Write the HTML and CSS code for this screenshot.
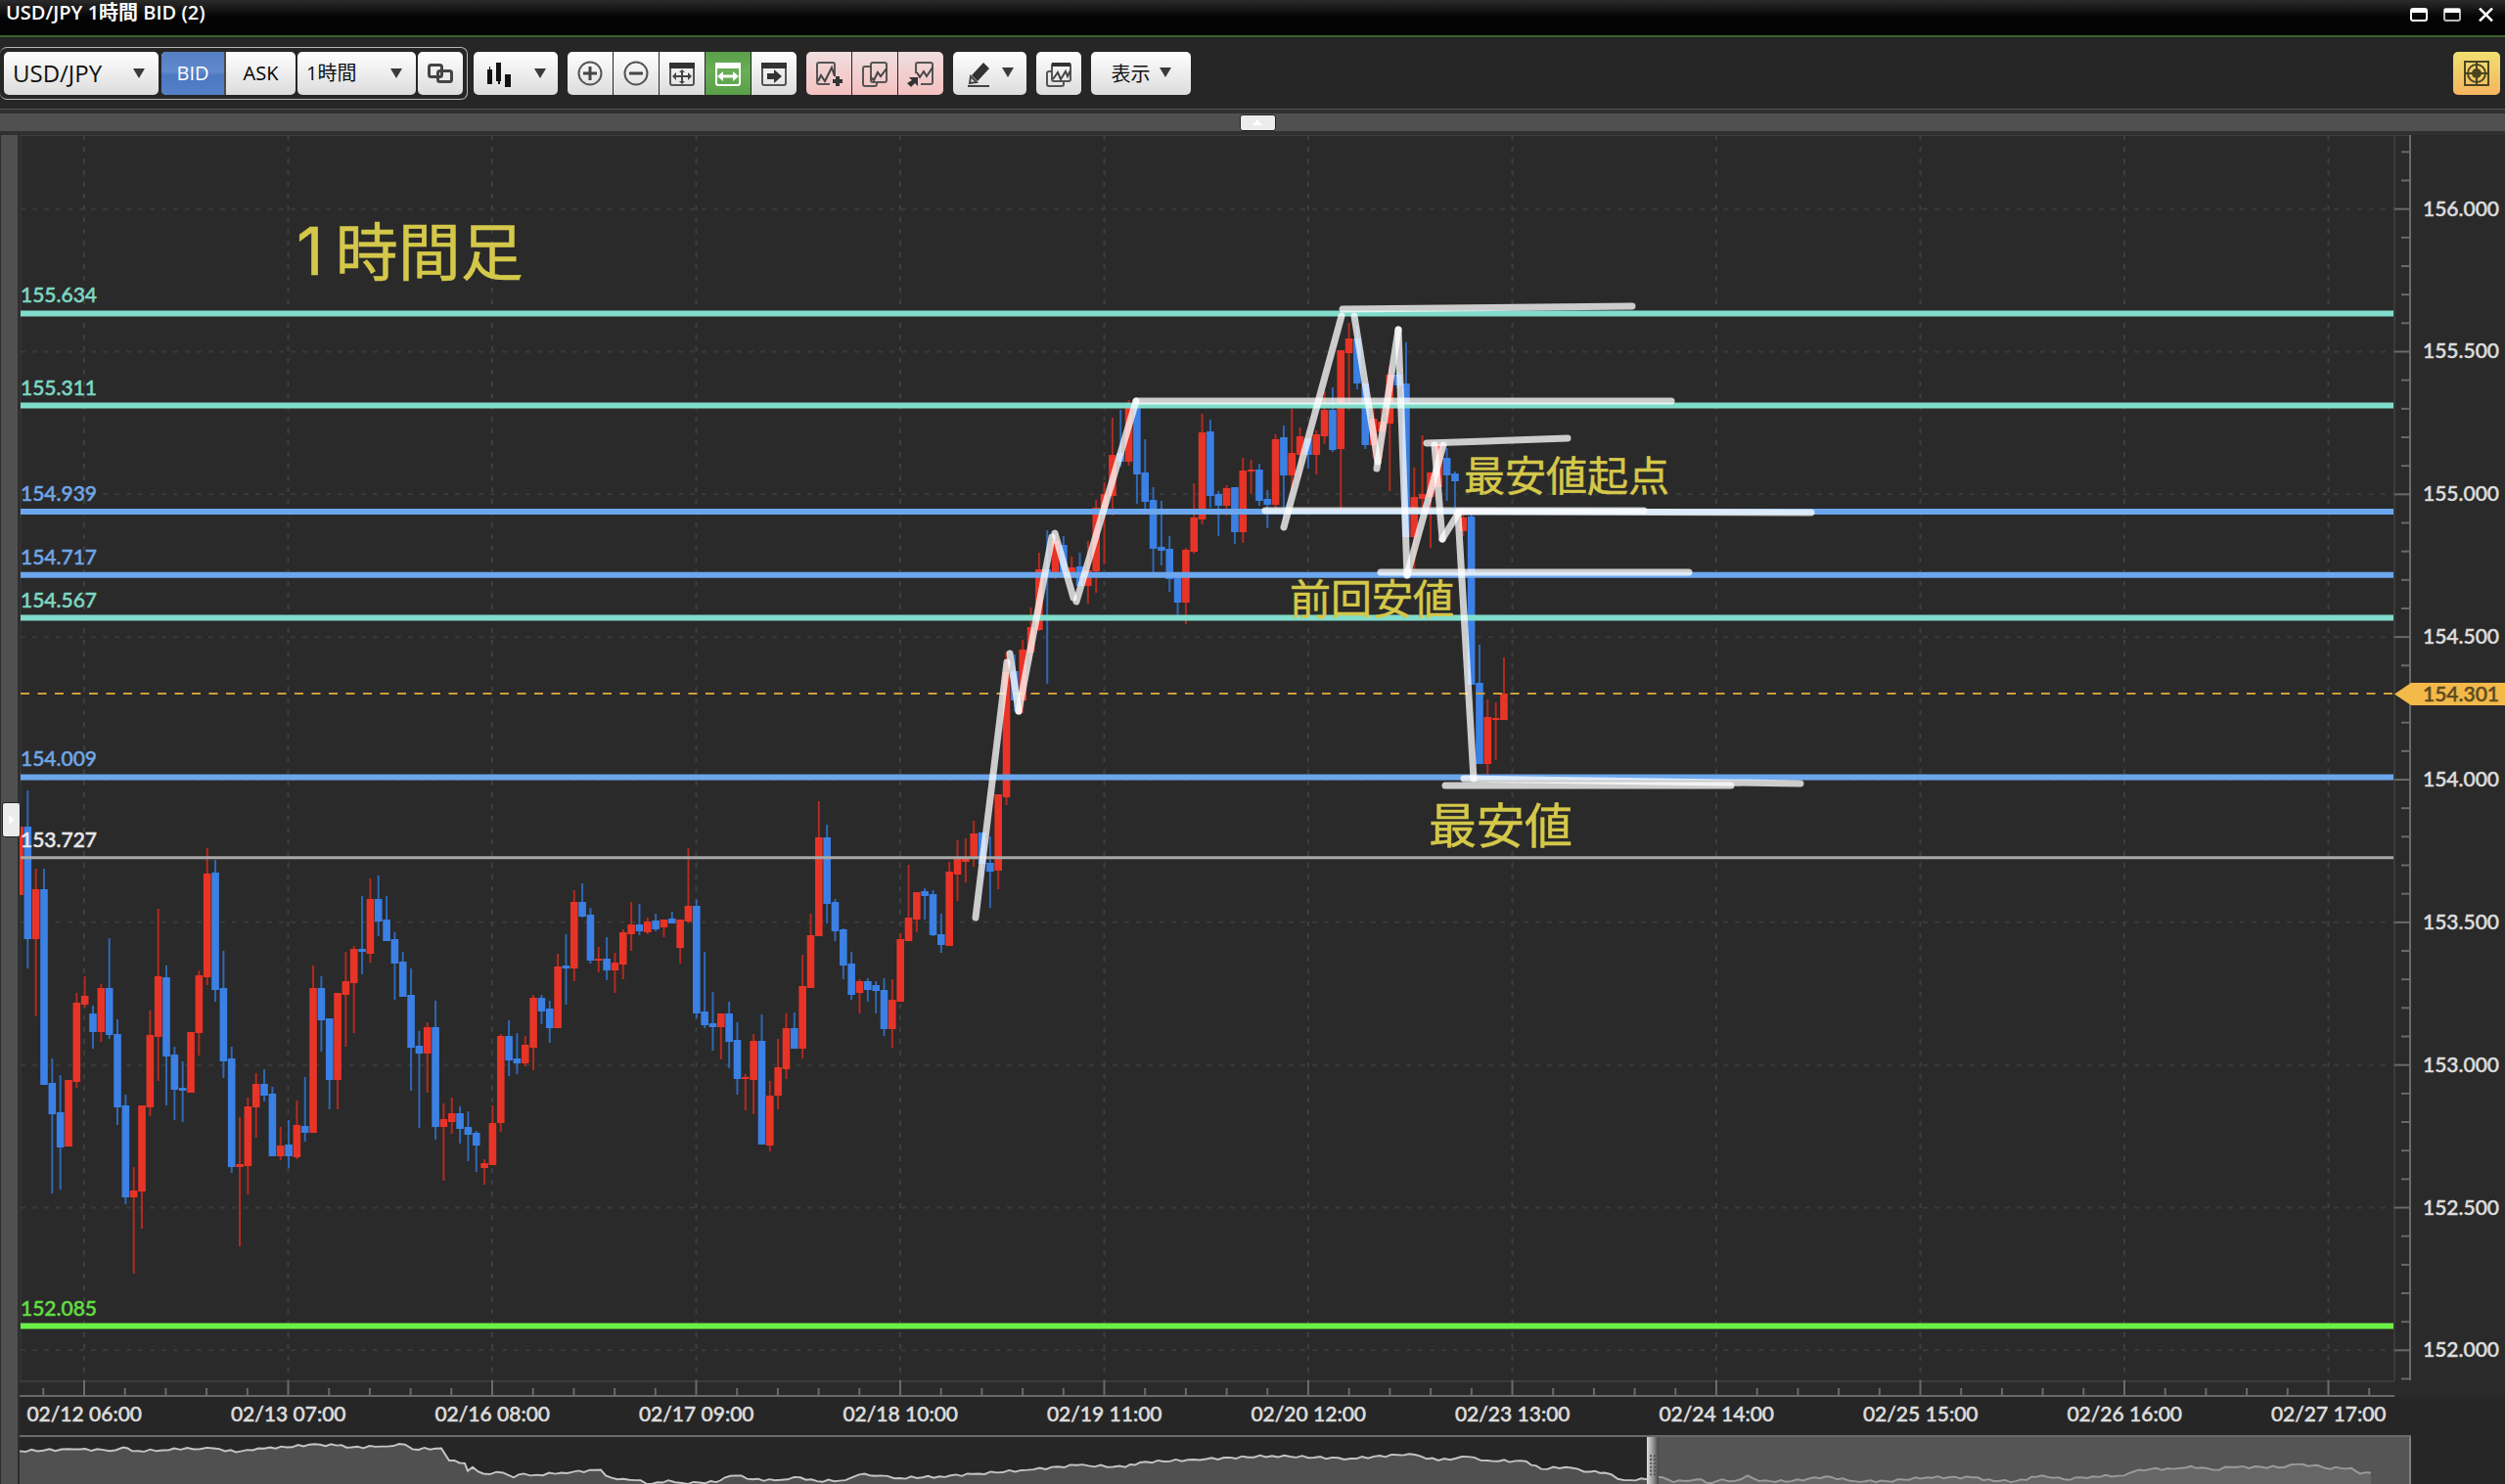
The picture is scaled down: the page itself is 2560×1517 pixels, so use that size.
FILE: index.html
```html
<!DOCTYPE html>
<html lang="ja">
<head>
  <meta charset="UTF-8" />
  <meta name="viewport" content="width=device-width, initial-scale=1.0"/>
  <title>USD/JPY 1時間 BID (2)</title>
  <link rel="stylesheet" href="styles.css">
</head>
<body>
  <header class="title-bar">
    <h1>USD/JPY 1時間 BID (2)</h1>
    <div class="window-buttons">
      <button type="button" aria-label="最小化">
        <svg width="18" height="14" viewBox="0 0 18 14"><rect x="1" y="1" width="16" height="12" rx="2" fill="none" stroke="#fff" stroke-width="2"/><path d="M1 1h16v4H1z" fill="#fff"/></svg>
      </button>
      <button type="button" aria-label="最大化">
        <svg width="18" height="14" viewBox="0 0 18 14"><rect x="1" y="1" width="16" height="12" rx="2" fill="none" stroke="#bbb" stroke-width="2"/><path d="M1 1h16v4H1z" fill="#fff"/></svg>
      </button>
      <button type="button" aria-label="閉じる">
        <svg width="18" height="14" viewBox="0 0 18 14"><path d="M3 0.500l13 13M16 0.500l-13 13" stroke="#fff" stroke-width="2.500"/></svg>
      </button>
    </div>
  </header>

  <nav class="toolbar">
    <div class="symbol-box">
      <div class="select select-symbol">
        <select aria-label="通貨ペア"><option>USD/JPY</option></select>
        <svg class="caret" viewBox="0 0 12 10"><path d="M0 0h12L6 10z"/></svg>
      </div>
      <div class="side">
        <button type="button" class="bid">BID</button>
        <button type="button" class="ask">ASK</button>
      </div>
      <div class="select select-period">
        <select aria-label="足種"><option>1時間</option></select>
        <svg class="caret" viewBox="0 0 12 10"><path d="M0 0h12L6 10z"/></svg>
      </div>
      <button type="button" class="btn" aria-label="連動">
        <svg class="icon" viewBox="0 0 28 28"><g fill="none" stroke="#444" stroke-width="3"><rect x="2.500" y="5.500" width="13" height="12" rx="2"/><rect x="11.500" y="11.500" width="14" height="11" rx="2"/></g></svg>
      </button>
    </div>

    <button type="button" class="btn btn-type" aria-label="チャート種類">
      <svg class="icon" viewBox="0 0 28 28"><path d="M2 10h5v15H2zM4 7h1v3H4zM11 3h5v19h-5zM13 22h2v3h-2zM20 15h6v13h-6z" fill="#111"/></svg>
      <svg class="caret" viewBox="0 0 12 10"><path d="M0 0h12L6 10z"/></svg>
    </button>

    <div class="group">
      <button type="button" class="btn" aria-label="拡大">
        <svg class="icon" viewBox="0 0 28 28"><circle cx="14" cy="14" r="11.500" fill="none" stroke="#555" stroke-width="2"/><path d="M7 14h14M14 7v14" stroke="#444" stroke-width="3"/></svg>
      </button>
      <button type="button" class="btn" aria-label="縮小">
        <svg class="icon" viewBox="0 0 28 28"><circle cx="14" cy="14" r="11.500" fill="none" stroke="#555" stroke-width="2"/><path d="M7 14h14" stroke="#444" stroke-width="3"/></svg>
      </button>
      <button type="button" class="btn" aria-label="全体表示">
        <svg class="icon" viewBox="0 0 28 28"><rect x="2" y="4" width="24" height="22" rx="2" fill="none" stroke="#555" stroke-width="2"/><path d="M1 3h26v6H1z" fill="#333"/><path d="M7 17h14M14 11v12" stroke="#444" stroke-width="2"/><path d="M4 17l4-4v8zM24 17l-4-4v8zM14 10l3 3h-6zM14 25l3-3h-6z" fill="#444"/></svg>
      </button>
      <button type="button" class="btn btn-active" aria-label="横幅に合わせる">
        <svg class="icon" viewBox="0 0 28 28"><rect x="2" y="4" width="24" height="22" rx="2" fill="none" stroke="#fff" stroke-width="2"/><path d="M1 3h26v6H1z" fill="#fff"/><path d="M7 17h14" stroke="#fff" stroke-width="3"/><path d="M3 17l6-5v10zM25 17l-6-5v10z" fill="#fff"/></svg>
      </button>
      <button type="button" class="btn" aria-label="最新へ移動">
        <svg class="icon" viewBox="0 0 28 28"><rect x="2" y="4" width="24" height="22" rx="2" fill="none" stroke="#555" stroke-width="2"/><path d="M1 3h26v6H1z" fill="#333"/><path d="M7 14h7v-4l8 7-8 7v-4H7z" fill="#333"/></svg>
      </button>
    </div>

    <div class="group group-pink">
      <button type="button" class="btn" aria-label="テクニカル追加">
        <svg class="icon" viewBox="0 0 28 28"><path d="M15 25H4a2 2 0 0 1-2-2V5a2 2 0 0 1 2-2h14a2 2 0 0 1 2 2v12" fill="none" stroke="#555" stroke-width="2"/><path d="M3 22l3-6 4 6 7-14 3 9" fill="none" stroke="#444" stroke-width="2"/><path d="M18 22h10M23 17v10" stroke="#333" stroke-width="4"/></svg>
      </button>
      <button type="button" class="btn" aria-label="テクニカル複製">
        <svg class="icon" viewBox="0 0 28 28"><g fill="none" stroke="#555" stroke-width="2"><path d="M10 7H4a2 2 0 0 0-2 2v16a2 2 0 0 0 2 2h10a2 2 0 0 0 2-2v-2"/><rect x="10" y="3" width="16" height="20" rx="2"/><path d="M10 18l3 3 4-8 3 4 6-8" stroke="#444"/></g></svg>
      </button>
      <button type="button" class="btn" aria-label="テクニカル呼出">
        <svg class="icon" viewBox="0 0 28 28"><g fill="none" stroke="#555" stroke-width="2"><path d="M9 14V5a2 2 0 0 1 2-2h13a2 2 0 0 1 2 2v18a2 2 0 0 1-2 2H14"/><path d="M10 13l3 5 4-6 3 5 6-9" stroke="#444"/></g><path d="M2 18h9v9l-3-3-4 4-4-4 5-3z" fill="#333"/></svg>
      </button>
    </div>

    <button type="button" class="btn btn-pen" aria-label="描画">
      <svg class="icon" viewBox="0 0 28 28"><path d="M18 3l6 6L12 22l-6-6z" fill="#333"/><path d="M5 17l6 6-7 1z" fill="none" stroke="#444" stroke-width="2"/><path d="M2 27h22" stroke="#444" stroke-width="2"/></svg>
      <svg class="caret" viewBox="0 0 12 10"><path d="M0 0h12L6 10z"/></svg>
    </button>

    <button type="button" class="btn" aria-label="チャート一覧">
      <svg class="icon" viewBox="0 0 28 28"><g fill="none" stroke="#555" stroke-width="2"><path d="M7 12H4a2 2 0 0 0-2 2v11a2 2 0 0 0 2 2h13a2 2 0 0 0 2-2v-3"/><rect x="7" y="4" width="19" height="18" rx="2"/><path d="M8 20l5-7 3 7 5-8 2 5 3-6" stroke="#444"/></g><path d="M7 3h19v4H7z" fill="#333"/></svg>
    </button>

    <button type="button" class="btn btn-view">表示
      <svg class="caret" viewBox="0 0 12 10"><path d="M0 0h12L6 10z"/></svg>
    </button>

    <button type="button" class="btn btn-target" aria-label="照準">
      <svg class="icon" viewBox="0 0 28 28"><g fill="none" stroke="#4a4520" stroke-width="2"><rect x="2" y="2" width="24" height="24"/><circle cx="14" cy="14" r="9"/><path d="M2 14h24M14 2v24" stroke-width="2"/></g><circle cx="14" cy="14" r="5" fill="#4a4520"/></svg>
    </button>
  </nav>

  <div class="splitter">
    <button type="button" class="splitter-handle" aria-label="上部パネル"><svg width="10" height="6" viewBox="0 0 10 6"><path d="M5 0l5 6H0z" fill="#fff"/></svg></button>
  </div>

  <main class="workspace">
    <aside class="rail">
      <button type="button" class="rail-handle" aria-label="左パネル"><svg width="6" height="10" viewBox="0 0 6 10"><path d="M0 0l6 5-6 5z" fill="#fff"/></svg></button>
    </aside>

    <section class="plot" id="plot">
      <svg id="chart" viewBox="20 138 2444 1290" preserveAspectRatio="none"></svg>
    </section>
    <div class="price-axis" id="price-axis"></div>

    <div class="time-axis" id="time-axis"></div>

    <div class="overview">
      <svg id="overview" viewBox="20 1467 2444 50" preserveAspectRatio="none"></svg>
    </div>
  </main>

  <script src="chart.js"></script>
</body>
</html>
```
FILE: styles.css
```css
* {
  margin: 0;
  padding: 0;
  box-sizing: border-box;
}

body {
  display: flex;
  flex-direction: column;
  height: 100vh;
  overflow: hidden;
  background-color: #262626;
  color: #dcdcdc;
  font-family: 'Open Sans', 'Noto Sans CJK JP', sans-serif;
  font-size: 20px;
}

button,
select {
  font: inherit;
  border: none;
  cursor: pointer;
}

svg {
  display: block;
}

/* Title bar */
.title-bar {
  display: flex;
  justify-content: space-between;
  height: 38px;
  padding: 0 11px 0 6px;
  background: linear-gradient(#2b2b2b, #030303 50%);
  border-bottom: 2px solid #37612f;
}

.title-bar h1 {
  font-size: 20px;
  font-weight: 600;
  line-height: 26px;
  color: #fff;
}

.window-buttons {
  display: flex;
  gap: 16px;
  height: 30px;
}

.window-buttons button {
  background: none;
}

/* Toolbar */
.toolbar {
  display: flex;
  align-items: center;
  gap: 10px;
  height: 74px;
  padding: 0 5px 0 0;
  border-bottom: 1px solid #555;
}

.symbol-box {
  display: flex;
  gap: 2px;
  margin-right: -4px;
  padding: 4px;
  border: 1px solid #b5b5b5;
  border-left-width: 0;
  border-radius: 7px;
}

.btn,
.select,
.side {
  height: 44px;
  border-radius: 5px;
  background: linear-gradient(#fff, #dcdcdc);
}

.btn {
  display: flex;
  align-items: center;
  justify-content: center;
  gap: 12px;
  width: 46px;
  color: #111;
}

.icon {
  width: 28px;
  height: 28px;
}

.caret {
  width: 12px;
  height: 10px;
  fill: #3a3a3a;
}

.select {
  position: relative;
}

.select select {
  width: 100%;
  height: 100%;
  padding-left: 9px;
  appearance: none;
  background: none;
  color: #111;
}

.select .caret {
  position: absolute;
  top: 17px;
  right: 14px;
  pointer-events: none;
}

.select-symbol {
  width: 158px;
}

.select-symbol select {
  font-size: 24px;
}

.select-period {
  width: 121px;
}

.side {
  display: flex;
  overflow: hidden;
  margin-left: 1px;
}

.side button {
  background: none;
}

.side .bid {
  width: 66px;
  background: linear-gradient(#557fc4, #6189cc 45%, #4c78c2 55%, #5480c8);
  border-right: 2px solid #4a4a4a;
  color: #fff;
}

.side .ask {
  width: 71px;
}

.group {
  display: flex;
  gap: 1px;
}

.group .btn {
  border-radius: 0;
}

.group .btn:first-child {
  border-radius: 5px 0 0 5px;
}

.group .btn:last-child {
  border-radius: 0 5px 5px 0;
}

.group .btn-active {
  background: linear-gradient(#5a9e4a, #6aae57 45%, #58a046);
}

.group-pink .btn {
  background: linear-gradient(#f0dede, #f5c0c0);
}

.btn-type {
  width: 86px;
  gap: 22px;
}

.btn-pen {
  width: 75px;
}

.btn-view {
  width: 102px;
}

.btn-view .caret,
.btn-pen .caret {
  margin-bottom: 2px;
}

.btn-pen,
.btn-view {
  gap: 9px;
}

.btn-target {
  width: 48px;
  margin-left: auto;
  background: linear-gradient(#efe070, #f5b560);
}

/* Splitters */
.splitter {
  display: flex;
  align-items: center;
  justify-content: center;
  height: 26px;
  padding-left: 10px;
  background-color: #505050;
  border-top: 4px solid #303030;
  border-bottom: 4px solid #303030;
}

.splitter-handle,
.rail-handle {
  display: flex;
  align-items: center;
  justify-content: center;
  background-color: #ececec;
  border: 1px solid #222;
  border-radius: 3px;
}

.splitter-handle {
  width: 37px;
  height: 17px;
}

.rail {
  grid-row: 1 / 4;
  display: flex;
  align-items: center;
  padding-top: 20px;
  background: linear-gradient(90deg, #2d2d2d 1px, #505050 1px, #505050 18px, #2d2d2d 18px);
}

.rail-handle {
  flex: none;
  width: 19px;
  height: 36px;
  margin-left: 2px;
  position: relative;
  z-index: 2;
}

/* Chart */
.workspace {
  flex: 1;
  min-height: 0;
  display: grid;
  grid-template-columns: 20px 1fr 96px;
  grid-template-rows: 1fr 39px 50px;
  font-family: Lato, 'Noto Sans CJK JP', sans-serif;
  font-size: 21px;
  font-weight: 500;
  -webkit-text-stroke: 0.5px currentColor;
}

.plot,
.price-axis {
  position: relative;
  min-height: 0;
  background-color: #2a2a2a;
}

.plot svg {
  position: absolute;
  width: 100%;
  height: 100%;
}

.level-label {
  position: absolute;
  left: 1px;
  margin-top: -31px;
  line-height: 24px;
}

.level-label.teal { color: #7dd6c2; }
.level-label.blue { color: #6fa5e6; }
.level-label.white { color: #e8e8e8; }
.level-label.green { color: #62dc42; }

.note {
  position: absolute;
  transform: translateY(-50%);
  color: #d4c84a;
  font-family: 'Noto Sans CJK JP', sans-serif;
  font-weight: 400;
  line-height: 1;
  white-space: nowrap;
}

.note-small { font-size: 42px; }
.note-medium { font-size: 49px; }
.note-large { font-size: 64px; }

.note-large b {
  margin-right: 12px;
  font-family: Inter, sans-serif;
  font-size: 68px;
  font-weight: 400;
}

.price-axis span {
  position: absolute;
  left: 12px;
  margin-top: -13px;
  line-height: 24px;
}

.price-axis .current {
  left: -17px;
  width: 113px;
  height: 23px;
  margin-top: -11px;
  padding-left: 29px;
  line-height: 22px;
  background-color: #f3b949;
  color: #5c4a22;
  clip-path: polygon(0 50%, 17px 0, 100% 0, 100% 100%, 17px 100%);
}

.time-axis {
  display: grid;
  grid-template-columns: repeat(12, 1fr);
  grid-column: 2;
  margin: 0 -20px 0 -38px;
  line-height: 34px;
  text-align: center;
}

.overview {
  grid-column: 2;
  border-top: 2px solid #6a6a6a;
}

.overview svg {
  width: 100%;
  height: 100%;
}
```
FILE: chart.js
```js
// Chart units: one candle every 8.335, 291.67 per yen, 154.000 sits at 797
const LEFT = 20, TOP = 138, WIDTH = 2444, HEIGHT = 1290;
const priceY = p => 797 + (154 - p) * 291.67;
const pctX = x => ((x - LEFT) / WIDTH * 100) + '%';
const pctY = y => ((y - TOP) / HEIGHT * 100) + '%';

// colour, high, body top, body bottom, low
const candles = `r 845 845 915 915,b 808 845 960 990,r 888 909 960 1039,b 888 909 1109 1109,b 1082 1107 1139 1220,
b 1099 1137 1173 1216,r 1104 1104 1172 1172,r 1015 1025 1106 1112,r 998 1018 1027 1030,b 1028 1036 1055 1072,
r 1006 1010 1055 1065,b 959 1010 1058 1062,b 1042 1057 1132 1150,b 1119 1130 1224 1231,r 1193 1217 1224 1302,
r 1130 1130 1218 1256,r 1033 1058 1132 1141,r 929 998 1060 1105,b 987 999 1080 1130,b 1070 1078 1114 1145,
b 1085 1112 1115 1147,r 1055 1055 1117 1117,r 992 997 1056 1079,r 867 893 999 1007,b 879 892 1012 1024,
b 972 1010 1085 1102,b 1070 1082 1193 1199,r 1142 1190 1193 1274,r 1122 1131 1192 1221,r 1097 1108 1132 1163,
b 1093 1108 1120 1126,b 1111 1118 1182 1182,r 1152 1171 1182 1186,b 1145 1170 1182 1194,r 1125 1150 1183 1185,
b 1101 1151 1158 1167,r 987 1010 1158 1158,b 998 1010 1043 1075,b 1041 1041 1104 1134,r 1015 1015 1104 1134,
r 973 1003 1017 1070,r 967 970 1005 1056,b 916 970 973 996,r 898 919 975 984,b 895 919 942 957,
b 916 940 962 962,b 953 960 985 1022,b 973 983 1019 1019,b 990 1017 1071 1115,b 1054 1069 1077 1153,
r 1045 1050 1077 1117,b 1023 1050 1152 1165,r 1128 1144 1152 1207,r 1122 1138 1147 1159,b 1131 1138 1154 1169,
b 1136 1152 1160 1187,b 1156 1158 1171 1198,r 1185 1189 1194 1211,r 1130 1148 1191 1191,r 1057 1059 1148 1157,
b 1043 1059 1084 1100,b 1056 1082 1087 1098,r 1059 1068 1087 1090,r 1017 1020 1071 1094,b 1017 1020 1034 1047,
b 1023 1031 1051 1066,r 975 988 1051 1051,b 955 987 990 1027,r 910 922 990 1003,b 903 922 937 938,
b 928 935 982 985,r 968 980 982 994,b 958 980 992 1002,r 974 984 992 1015,r 950 953 986 1001,
r 922 945 955 972,b 924 945 952 956,r 938 942 953 955,b 934 941 950 952,r 940 940 948 958,
b 932 939 944 944,r 940 940 969 985,r 867 926 942 944,b 920 926 1036 1041,b 973 1034 1048 1051,
b 1014 1046 1050 1074,r 1036 1036 1050 1083,b 1024 1036 1065 1092,b 1045 1063 1103 1119,r 1098 1101 1103 1135,
r 1057 1064 1104 1139,b 1037 1064 1170 1170,r 1105 1120 1171 1177,r 1062 1091 1120 1134,r 1036 1051 1093 1103,
b 1035 1051 1072 1072,r 976 1008 1072 1082,r 934 956 1010 1010,r 819 856 957 957,b 843 856 924 944,
b 919 922 952 962,b 949 950 987 1001,b 973 985 1017 1022,r 1001 1003 1015 1036,b 1000 1003 1012 1024,
b 1003 1007 1013 1036,b 1000 1012 1052 1059,r 1001 1022 1052 1071,r 954 960 1024 1024,r 884 938 962 962,
r 912 912 940 953,b 908 911 916 940,b 910 914 956 957,b 934 955 966 974,r 881 891 967 967,
r 859 878 894 921,r 857 877 881 902,r 839 852 877 886,b 851 851 883 897,b 855 882 891 928,
r 812 812 890 909,r 667 687 815 823,b 669 686 716 727,r 654 664 716 729,r 621 641 667 676,
r 565 582 644 645,b 542 582 587 699,r 547 553 585 592,b 548 557 585 588,r 569 580 588 591,
b 565 579 599 599,r 553 583 599 617,r 511 519 584 606,r 493 505 523 577,r 427 465 507 527,
b 419 463 472 477,r 409 413 472 476,b 406 413 485 515,b 449 483 513 520,b 498 511 561 586,
b 512 559 563 578,b 548 561 592 605,b 587 587 616 630,r 560 562 616 638,r 494 529 564 566,
r 423 442 531 536,b 429 441 507 519,b 502 505 517 548,r 496 499 517 527,b 498 498 544 556,
r 468 481 544 555,r 470 480 482 505,b 474 480 512 517,b 501 510 516 540,r 444 449 516 520,
b 435 447 486 531,r 418 463 486 500,r 437 446 465 488,b 448 448 465 479,r 440 444 465 485,
r 400 419 446 454,b 396 419 460 462,r 358 358 459 521,r 330 346 361 419,b 333 346 392 398,
b 392 392 455 459,r 411 428 455 469,r 417 431 441 469,r 374 383 433 502,b 380 383 394 397,
b 350 392 549 549,r 478 508 549 583,r 445 505 510 524,r 483 483 508 560,r 454 454 498 498,
b 458 468 486 512,b 482 484 492 519,r 526 529 543 548,b 526 528 700 700,b 659 698 781 781,
r 715 733 781 792,r 718 734 736 777,r 672 709 736 736`.split(',').map(s => s.trim().split(' '));

const levels = [
  [155.634, 'teal'], [155.311, 'teal'], [154.939, 'blue'], [154.717, 'blue'],
  [154.567, 'teal'], [154.009, 'blue'], [153.727, 'white'], [152.085, 'green']
];
const levelColors = { teal: '#80dccb', blue: '#6ca7ee', white: '#a8a8a8', green: '#6cf046' };

// hand drawn strokes: x1 y1 x2 y2
const strokes = [
  [997, 938, 1029, 677], [1032, 668, 1041, 727], [1041, 727, 1075, 549], [1078, 545, 1097, 611],
  [1100, 615, 1161, 410], [1161, 410, 1708, 410], [1372, 316, 1668, 313], [1312, 539, 1371, 323],
  [1384, 323, 1408, 472], [1407, 479, 1429, 337], [1429, 337, 1438, 588], [1438, 588, 1475, 455],
  [1458, 453, 1602, 448], [1466, 455, 1474, 551], [1474, 551, 1490, 525], [1490, 525, 1506, 796],
  [1293, 522, 1680, 522], [1490, 523, 1851, 524], [1411, 585, 1726, 585], [1496, 796, 1840, 801],
  [1477, 803, 1769, 803]
];

const notes = [
  ['<b>1</b>時間足', 'note-large', 303, 255],
  ['最安値起点', 'note-small', 1496, 484],
  ['前回安値', 'note-small', 1318, 610],
  ['最安値', 'note-medium', 1460, 840]
];

function line(x1, y1, x2, y2, color, width, extra) {
  return `<line x1="${x1}" y1="${y1}" x2="${x2}" y2="${y2}" stroke="${color}" stroke-width="${width}" ${extra || ''}/>`;
}

let svg = '';

// grid and scales
for (let k = 0; k < 12; k++) {
  const x = 86 + k * 208.5;
  svg += line(x, 138, x, 1411, '#3e3e3e', 2, 'stroke-dasharray="5 7"');
}
for (let p = 152; p <= 156; p += 0.5) {
  svg += line(21, priceY(p), 2447, priceY(p), '#3a3a3a', 2, 'stroke-dasharray="5 7"');
}
svg += line(20, 138, 2464, 138, '#3b3b3b', 2) + line(2447, 138, 2447, 1411, '#3b3b3b', 2);
svg += line(20, 1412, 2447, 1412, '#3b3b3b', 2) + line(20, 1427, 2447, 1427, '#6a6a6a', 2);
svg += line(2463, 138, 2463, 1411, '#6a6a6a', 2) + line(21, 138, 21, 1412, '#3b3b3b', 1);
for (let k = 0; k < 58; k++) {
  const x = 44.3 + k * 41.7;
  svg += line(x, k % 5 === 1 ? 1411 : 1419, x, 1427, '#6a6a6a', 2);
}
for (let k = 0; k < 44; k++) {
  const y = priceY(156.2 - k * 0.1);
  svg += line(k % 5 === 2 ? 2447 : 2454, y, 2463, y, '#6a6a6a', 2);
}

// candles
candles.forEach(([c, high, top, bottom, low], i) => {
  const x = 20 + i * 8.335;
  svg += line(x, high, x, low, c === 'r' ? '#b32a20' : '#2f68b5', 2);
  svg += `<rect x="${x - 3.8}" y="${top}" width="7.6" height="${bottom - top}" fill="${c === 'r' ? '#e83427' : '#3b80e4'}"/>`;
});

// price levels
levels.forEach(([p, c]) => {
  svg += line(21, priceY(p), 2446, priceY(p), levelColors[c], c === 'white' ? 3 : 6);
});
svg += line(21, 709, 2447, 709, '#cf9f3c', 2, 'stroke-dasharray="9 8.5"');

strokes.forEach(s => {
  svg += line(...s, '#fff', 7, 'stroke-linecap="round" stroke-opacity="0.76"');
});

document.getElementById('chart').innerHTML = svg;

// labels
let labels = '';
levels.forEach(([p, c]) => {
  labels += `<span class="level-label ${c}" style="top:${pctY(priceY(p))}">${p.toFixed(3)}</span>`;
});
notes.forEach(([text, cls, x, y]) => {
  labels += `<div class="note ${cls}" style="left:${pctX(x)};top:${pctY(y)}">${text}</div>`;
});
document.getElementById('plot').insertAdjacentHTML('beforeend', labels);

let prices = '';
for (let p = 156; p >= 152; p -= 0.5) {
  prices += `<span style="top:${pctY(priceY(p))}">${p.toFixed(3)}</span>`;
}
prices += `<span class="current" style="top:${pctY(709)}">154.301</span>`;
document.getElementById('price-axis').innerHTML = prices;

const times = ['02/12 06:00', '02/13 07:00', '02/16 08:00', '02/17 09:00', '02/18 10:00', '02/19 11:00',
  '02/20 12:00', '02/23 13:00', '02/24 14:00', '02/25 15:00', '02/26 16:00', '02/27 17:00'];
document.getElementById('time-axis').innerHTML = times.map(t => `<time>${t}</time>`).join('');

// overview strip, with small ripples between the main turning points
function ripple(points) {
  const pts = points.split(' ').map(s => s.split(',').map(Number));
  const out = [];
  for (let i = 0; i < pts.length - 1; i++) {
    const [x1, y1] = pts[i], [x2, y2] = pts[i + 1];
    const steps = Math.max(1, Math.round((x2 - x1) / 6));
    for (let s = 0; s < steps; s++) {
      const wobble = s ? Math.sin(s * 2.3 + i) * 1.2 : 0;
      out.push((x1 + (x2 - x1) * s / steps) + ',' + (y1 + (y2 - y1) * s / steps + wobble));
    }
  }
  out.push(pts[pts.length - 1].join(','));
  return out.join(' ');
}

const past = ripple('20,1482 75,1480 118,1481 126,1478 135,1482 166,1481 178,1479 198,1480 218,1479 230,1482 247,1482 264,1479 276,1478 293,1478 316,1475 344,1476 359,1478 390,1477 414,1475 422,1480 451,1479 459,1492 475,1495 478,1503 483,1499 494,1506 514,1505 525,1510 535,1506 542,1508 574,1505 614,1502 619,1508 631,1512 649,1513 666,1517 683,1513 697,1516 732,1515 741,1510 752,1508 769,1512 792,1513 818,1510 835,1514 864,1513 878,1507 900,1508 914,1511 960,1509 1000,1506 1050,1502 1100,1497 1150,1499 1165,1494 1220,1491 1300,1487 1380,1490 1440,1485 1470,1492 1500,1488 1520,1492 1560,1493 1575,1501 1600,1499 1625,1504 1640,1505 1660,1513 1683,1512');
const recent = ripple('1683,1512 1699,1510 1710,1515 1734,1512 1749,1516 1760,1512 1772,1514 1786,1508 1798,1514 1831,1514 1866,1509 1895,1514 1928,1514 1969,1510 2021,1510 2027,1513 2060,1514 2087,1508 2109,1512 2139,1509 2171,1508 2180,1504 2198,1501 2221,1501 2239,1498 2262,1502 2280,1499 2335,1499 2347,1496 2359,1498 2368,1497 2376,1500 2403,1500 2412,1506 2423,1505');
document.getElementById('overview').innerHTML = `
  <defs><linearGradient id="grip"><stop offset="0" stop-color="#ddd"/><stop offset="0.5" stop-color="#999"/><stop offset="1" stop-color="#444"/></linearGradient></defs>
  <polygon points="${past} 1683,1520 20,1520" fill="#505050"/>
  <polyline points="${past}" fill="none" stroke="#c4c4c4" stroke-width="2"/>
  <rect x="1684" y="1467" width="779" height="52" fill="#555"/>
  <polygon points="${recent} 2423,1520 1683,1520" fill="#666"/>
  <polyline points="${recent}" fill="none" stroke="#9a9a9a" stroke-width="2"/>
  <path d="M2463 1467v52" stroke="#808080" stroke-width="2"/>
  <rect x="1683" y="1465" width="12" height="54" fill="url(#grip)"/>
  <path d="M1687 1486v24M1691 1486v24" stroke="#555" stroke-width="2" stroke-dasharray="2 2"/>`;
```
